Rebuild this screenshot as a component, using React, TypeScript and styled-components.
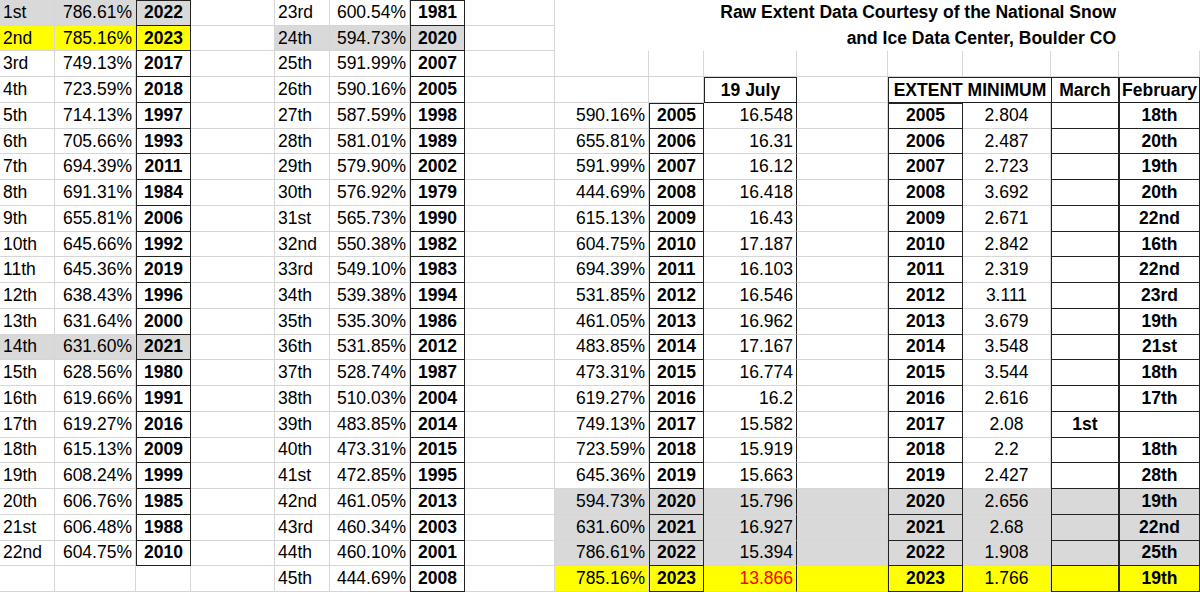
import React from 'react';
import styled, { createGlobalStyle } from 'styled-components';

const Global = createGlobalStyle`
  html, body { margin: 0; padding: 0; background: #fff; }
  body { font-family: "Liberation Sans", Arial, sans-serif; }
`;

const COLS = [55, 81, 55, 84, 55, 80, 55, 90, 94, 55, 93, 91, 75, 88, 68, 81];
const ROWS = 23;
const FS = '17.5px';

const Sheet = styled.div`
  position: relative;
  display: grid;
  grid-template-columns: ${COLS.map((c) => c + 'px').join(' ')};
  grid-template-rows: repeat(${ROWS}, 1fr);
  width: 1200px;
  height: 592px;
  overflow: hidden;
`;

type Align = 'left' | 'right' | 'center';

const Cell = styled.div<{ $align: Align; $bold?: boolean; $bg?: string; $box?: boolean; $rbox?: boolean; $color?: string }>`
  box-sizing: border-box;
  display: flex;
  align-items: center;
  justify-content: ${(p) => (p.$align === 'left' ? 'flex-start' : p.$align === 'right' ? 'flex-end' : 'center')};
  padding: 0 3px;
  font-size: ${FS};
  font-weight: ${(p) => (p.$bold ? 700 : 400)};
  color: ${(p) => p.$color || '#000'};
  background: ${(p) => p.$bg || '#fff'};
  border-right: 1px solid ${(p) => (p.$box || p.$rbox ? '#222' : '#d6d6d6')};
  border-bottom: 1px solid ${(p) => (p.$box ? '#222' : '#d6d6d6')};
  border-left: ${(p) => (p.$box ? '1px solid #222' : 'none')};
  white-space: nowrap;
  overflow: hidden;
`;

const Title = styled.div`
  grid-column: 9 / 17;
  grid-row: 1 / 3;
  background: #fff;
  text-align: right;
  padding-right: 84px;
  font-size: ${FS};
  font-weight: 700;
  line-height: 25.7px;
  z-index: 1;
`;

const GRAY = '#d9d9d9';
const YELLOW = '#ffff00';

const left: [string, string, string][] = [
  ['1st', '786.61%', '2022'], ['2nd', '785.16%', '2023'], ['3rd', '749.13%', '2017'], ['4th', '723.59%', '2018'],
  ['5th', '714.13%', '1997'], ['6th', '705.66%', '1993'], ['7th', '694.39%', '2011'], ['8th', '691.31%', '1984'],
  ['9th', '655.81%', '2006'], ['10th', '645.66%', '1992'], ['11th', '645.36%', '2019'], ['12th', '638.43%', '1996'],
  ['13th', '631.64%', '2000'], ['14th', '631.60%', '2021'], ['15th', '628.56%', '1980'], ['16th', '619.66%', '1991'],
  ['17th', '619.27%', '2016'], ['18th', '615.13%', '2009'], ['19th', '608.24%', '1999'], ['20th', '606.76%', '1985'],
  ['21st', '606.48%', '1988'], ['22nd', '604.75%', '2010'],
];

const middle: [string, string, string][] = [
  ['23rd', '600.54%', '1981'], ['24th', '594.73%', '2020'], ['25th', '591.99%', '2007'], ['26th', '590.16%', '2005'],
  ['27th', '587.59%', '1998'], ['28th', '581.01%', '1989'], ['29th', '579.90%', '2002'], ['30th', '576.92%', '1979'],
  ['31st', '565.73%', '1990'], ['32nd', '550.38%', '1982'], ['33rd', '549.10%', '1983'], ['34th', '539.38%', '1994'],
  ['35th', '535.30%', '1986'], ['36th', '531.85%', '2012'], ['37th', '528.74%', '1987'], ['38th', '510.03%', '2004'],
  ['39th', '483.85%', '2014'], ['40th', '473.31%', '2015'], ['41st', '472.85%', '1995'], ['42nd', '461.05%', '2013'],
  ['43rd', '460.34%', '2003'], ['44th', '460.10%', '2001'], ['45th', '444.69%', '2008'],
];

// year, pct, 19 July, extent, march, february
const right: string[][] = [
  ['2005', '590.16%', '16.548', '2.804', '', '18th'],
  ['2006', '655.81%', '16.31', '2.487', '', '20th'],
  ['2007', '591.99%', '16.12', '2.723', '', '19th'],
  ['2008', '444.69%', '16.418', '3.692', '', '20th'],
  ['2009', '615.13%', '16.43', '2.671', '', '22nd'],
  ['2010', '604.75%', '17.187', '2.842', '', '16th'],
  ['2011', '694.39%', '16.103', '2.319', '', '22nd'],
  ['2012', '531.85%', '16.546', '3.111', '', '23rd'],
  ['2013', '461.05%', '16.962', '3.679', '', '19th'],
  ['2014', '483.85%', '17.167', '3.548', '', '21st'],
  ['2015', '473.31%', '16.774', '3.544', '', '18th'],
  ['2016', '619.27%', '16.2', '2.616', '', '17th'],
  ['2017', '749.13%', '15.582', '2.08', '1st', ''],
  ['2018', '723.59%', '15.919', '2.2', '', '18th'],
  ['2019', '645.36%', '15.663', '2.427', '', '28th'],
  ['2020', '594.73%', '15.796', '2.656', '', '19th'],
  ['2021', '631.60%', '16.927', '2.68', '', '22nd'],
  ['2022', '786.61%', '15.394', '1.908', '', '25th'],
  ['2023', '785.16%', '13.866', '1.766', '', '19th'],
];

type Spec = { text?: string; align?: Align; bold?: boolean; bg?: string; box?: boolean; rbox?: boolean; color?: string };

const spec = (r: number, c: number): Spec => {
  if (c <= 2) {
    const d = left[r];
    if (!d) return {};
    const bg = r === 0 || r === 13 ? GRAY : r === 1 ? YELLOW : undefined;
    if (c === 0) return { text: d[0], align: 'left', bg };
    if (c === 1) return { text: d[1], align: 'right', bg };
    return { text: d[2], align: 'center', bold: true, box: true, bg };
  }
  if (c >= 4 && c <= 6) {
    const d = middle[r];
    if (!d) return {};
    const bg = r === 1 ? GRAY : undefined;
    if (c === 4) return { text: d[0], align: 'left', bg };
    if (c === 5) return { text: d[1], align: 'right', bg };
    return { text: d[2], align: 'center', bold: true, box: true, bg };
  }
  if (r === 3) {
    if (c === 10) return { text: '19 July', align: 'center', bold: true, box: true };
    if (c === 14) return { text: 'March', align: 'center', bold: true, box: true };
    if (c === 15) return { text: 'February', align: 'center', bold: true, box: true };
  }
  if (c >= 8 && r >= 4) {
    const d = right[r - 4];
    if (!d) return {};
    const bg = r >= 19 && r <= 21 ? GRAY : r === 22 ? YELLOW : undefined;
    switch (c) {
      case 8: return { text: d[1], align: 'right', bg };
      case 9: return { text: d[0], align: 'center', bold: true, box: true, bg };
      case 10: return { text: d[2], align: 'right', rbox: true, bg, color: r === 22 ? '#ff0000' : undefined };
      case 11: return { bg };
      case 12: return { text: d[0], align: 'center', bold: true, box: true, bg };
      case 13: return { text: d[3], align: 'center', bg };
      case 14: return { text: d[4], align: 'center', bold: true, box: true, bg };
      case 15: return { text: d[5], align: 'center', bold: true, box: true, bg };
    }
  }
  return {};
};

const Extent = styled.div`
  grid-column: 13 / 15;
  grid-row: 4 / 5;
  box-sizing: border-box;
  display: flex;
  align-items: center;
  justify-content: center;
  font-size: ${FS};
  font-weight: 700;
  border: 1px solid #222;
  border-right: none;
  background: #fff;
  z-index: 1;
  white-space: nowrap;
`;

export default function App() {
  const cells: React.ReactNode[] = [];
  for (let r = 0; r < ROWS; r++) {
    for (let c = 0; c < COLS.length; c++) {
      const s = spec(r, c);
      const topBox = s.box && (r === 0 || !spec(r - 1, c).box);
      cells.push(
        <Cell
          key={`${r}-${c}`}
          $align={s.align || 'left'}
          $bold={s.bold}
          $bg={s.bg}
          $box={s.box}
          $rbox={s.rbox}
          $color={s.color}
          style={{ gridRow: r + 1, gridColumn: c + 1, borderTop: topBox ? '1px solid #222' : undefined }}
        >
          {s.text}
        </Cell>
      );
    }
  }
  return (
    <>
      <Global />
      <Sheet>
        {cells}
        <Title>
          Raw Extent Data Courtesy of the National Snow
          <br />
          and Ice Data Center, Boulder CO
        </Title>
        <Extent>EXTENT MINIMUM</Extent>
      </Sheet>
    </>
  );
}
